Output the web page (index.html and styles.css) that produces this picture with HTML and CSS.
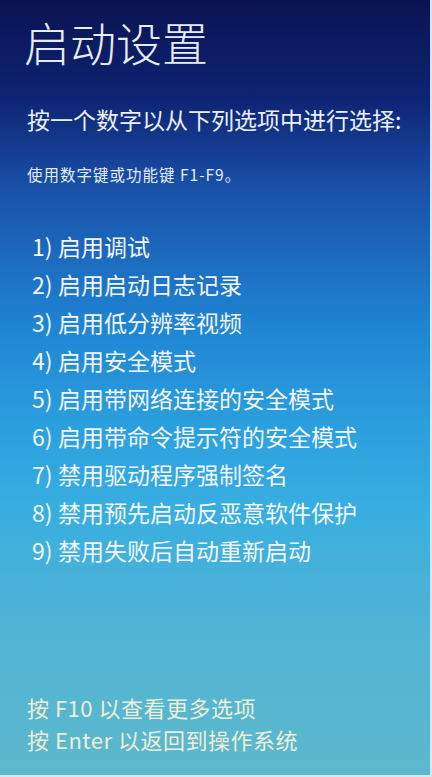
FILE: index.html
```html
<!DOCTYPE html>
<html lang="zh-CN">
<head>
<meta charset="utf-8">
<title>启动设置</title>
<link rel="stylesheet" href="styles.css">
</head>
<body>
<div class="screen">
  <h1 class="title">启动设置</h1>
  <p class="prompt">按一个数字以从下列选项中进行选择:</p>
  <p class="hint">使用数字键或功能键 F1-F9。</p>
  <ol class="options">
    <li><span class="num">1)</span>启用调试</li>
    <li><span class="num">2)</span>启用启动日志记录</li>
    <li><span class="num">3)</span>启用低分辨率视频</li>
    <li><span class="num">4)</span>启用安全模式</li>
    <li><span class="num">5)</span>启用带网络连接的安全模式</li>
    <li><span class="num">6)</span>启用带命令提示符的安全模式</li>
    <li><span class="num">7)</span>禁用驱动程序强制签名</li>
    <li><span class="num">8)</span>禁用预先启动反恶意软件保护</li>
    <li><span class="num">9)</span>禁用失败后自动重新启动</li>
  </ol>
  <div class="footer">
    <p>按 F10 以查看更多选项</p>
    <p>按 Enter 以返回到操作系统</p>
  </div>
</div>
</body>
</html>
```
FILE: styles.css
```css
html, body {
  margin: 0;
  padding: 0;
  height: 100%;
}
body {
  font-family: "Noto Sans CJK SC", "Noto Sans", sans-serif;
  color: #eef3fa;
  background: linear-gradient(180deg,
    #0b1352 0px,
    #0e2474 100px,
    #1a4fa8 185px,
    #1f86d4 330px,
    #2ca0de 430px,
    #38aee0 510px,
    #52b4d4 630px,
    #5cb8cc 777px);
  overflow: hidden;
}
.screen {
  box-sizing: border-box;
  height: 777px;
  padding: 13px 0 0 27px;
  border-right: 2px solid #d8e6f0;
  border-bottom: 2px solid #d8e6f0;
  display: flex;
  flex-direction: column;
}
.title {
  margin: 0;
  margin-left: -3px;
  font-size: 46px;
  line-height: 56px;
  font-weight: 300;
  color: #e6ecf4;
}
.prompt {
  margin: 33px 0 0;
  font-size: 23px;
  line-height: 34px;
  color: #eaf0f8;
}
.hint {
  margin: 26px 0 0;
  font-size: 15.5px;
  line-height: 24px;
  letter-spacing: 1px;
  color: #e2eef6;
}
.options {
  list-style: none;
  margin: 41px 0 0;
  padding: 0 0 0 5px;
}
.options li {
  font-size: 23px;
  line-height: 38px;
  color: #f2f6fb;
}
.num {
  display: inline-block;
  width: 26px;
}
.footer {
  margin-top: auto;
  margin-bottom: 20px;
}
.footer p {
  margin: 0;
  font-size: 22px;
  line-height: 32px;
  letter-spacing: 0.5px;
  color: #eeeed8;
}
```
